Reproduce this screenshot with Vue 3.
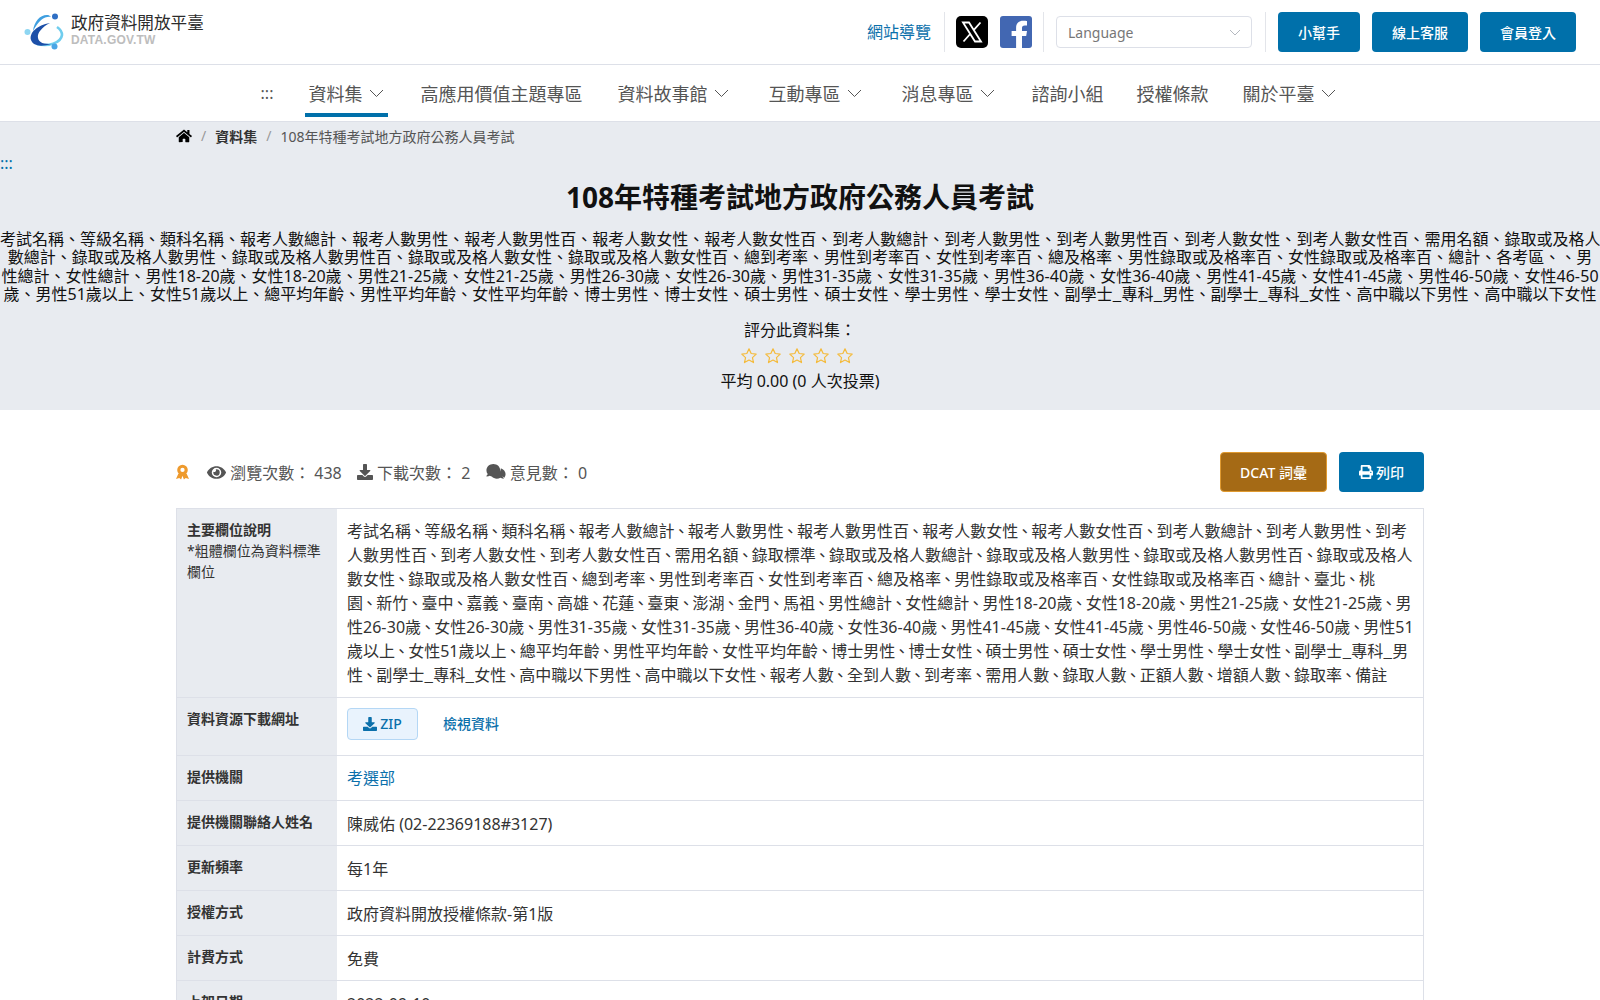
<script setup>
const navItems = [
  { label: '資料集', caret: true, active: true },
  { label: '高應用價值主題專區' },
  { label: '資料故事館', caret: true },
  { label: '互動專區', caret: true },
  { label: '消息專區', caret: true },
  { label: '諮詢小組' },
  { label: '授權條款' },
  { label: '關於平臺', caret: true }
]
const summaryLines = [
  '考試名稱、等級名稱、類科名稱、報考人數總計、報考人數男性、報考人數男性百、報考人數女性、報考人數女性百、到考人數總計、到考人數男性、到考人數男性百、到考人數女性、到考人數女性百、需用名額、錄取或及格人',
  '數總計、錄取或及格人數男性、錄取或及格人數男性百、錄取或及格人數女性、錄取或及格人數女性百、總到考率、男性到考率百、女性到考率百、總及格率、男性錄取或及格率百、女性錄取或及格率百、總計、各考區、、男',
  '性總計、女性總計、男性18-20歲、女性18-20歲、男性21-25歲、女性21-25歲、男性26-30歲、女性26-30歲、男性31-35歲、女性31-35歲、男性36-40歲、女性36-40歲、男性41-45歲、女性41-45歲、男性46-50歲、女性46-50',
  '歲、男性51歲以上、女性51歲以上、總平均年齡、男性平均年齡、女性平均年齡、博士男性、博士女性、碩士男性、碩士女性、學士男性、學士女性、副學士_專科_男性、副學士_專科_女性、高中職以下男性、高中職以下女性'
]
const fieldLines = [
  '考試名稱、等級名稱、類科名稱、報考人數總計、報考人數男性、報考人數男性百、報考人數女性、報考人數女性百、到考人數總計、到考人數男性、到考',
  '人數男性百、到考人數女性、到考人數女性百、需用名額、錄取標準、錄取或及格人數總計、錄取或及格人數男性、錄取或及格人數男性百、錄取或及格人',
  '數女性、錄取或及格人數女性百、總到考率、男性到考率百、女性到考率百、總及格率、男性錄取或及格率百、女性錄取或及格率百、總計、臺北、桃',
  '園、新竹、臺中、嘉義、臺南、高雄、花蓮、臺東、澎湖、金門、馬祖、男性總計、女性總計、男性18-20歲、女性18-20歲、男性21-25歲、女性21-25歲、男',
  '性26-30歲、女性26-30歲、男性31-35歲、女性31-35歲、男性36-40歲、女性36-40歲、男性41-45歲、女性41-45歲、男性46-50歲、女性46-50歲、男性51',
  '歲以上、女性51歲以上、總平均年齡、男性平均年齡、女性平均年齡、博士男性、博士女性、碩士男性、碩士女性、學士男性、學士女性、副學士_專科_男',
  '性、副學士_專科_女性、高中職以下男性、高中職以下女性、報考人數、全到人數、到考率、需用人數、錄取人數、正額人數、增額人數、錄取率、備註'
]
const rows = [
  ['提供機關', '考選部', true],
  ['提供機關聯絡人姓名', '陳威佑 (02-22369188#3127)'],
  ['更新頻率', '每1年'],
  ['授權方式', '政府資料開放授權條款-第1版'],
  ['計費方式', '免費'],
  ['上架日期', '2022-09-10']
]
const tokens = (line) => line.split(/([、_-])/).filter(Boolean)
const markClass = (t) => (t === '_' ? 'cjk' : t === '-' ? 'hy' : '')
const tokenClass = (t) => (t === '、' ? 'dun' : markClass(t))
</script>

<template>
  <div class="page">
    <header class="top">
      <div class="logo">
        <svg class="logo-mark" viewBox="0 0 40 38" width="40" height="38">
          <path d="M13 31C24 34 37 30 38 22C38 19 36 16 33 14" fill="none" stroke="#6fcdee" stroke-width="2.600" />
          <path d="M9 18C10 8 17 1 24 2c1 0 2 1 3 2-6-1-12 3-18 14z" fill="#3f9fe0" />
          <path d="M26 10C13 12 5 20 7 27c2 6 10 7 20 4-7 0-12-1-13-6-1-5 4-11 12-15z" fill="#1c4fa8" />
          <circle cx="31" cy="3.500" r="3" fill="#2f6fc4" />
          <circle cx="3.500" cy="19" r="3" fill="#8ed6f2" />
          <circle cx="30.500" cy="33.500" r="3" fill="#4aa6e6" />
        </svg>
        <div class="logo-text">
          <div class="logo-name">政府資料開放平臺</div>
          <div class="logo-domain">DATA.GOV.TW</div>
        </div>
      </div>
      <div class="tools">
        <a class="sitemap">網站導覽</a>
        <span class="sep"></span>
        <svg class="social x" viewBox="0 0 32 32" width="32" height="32">
          <rect width="32" height="32" rx="5" fill="#000" />
          <path d="M7 6.500h6l12 19h-6zM24.500 6.500 17.200 14.700M14.600 17.500 7.500 25.500" fill="none" stroke="#fff" stroke-width="1.800" />
        </svg>
        <svg class="social fb" viewBox="0 0 32 32" width="32" height="32">
          <rect width="32" height="32" rx="3" fill="#4267b2" />
          <path d="M22 32V20h4.200l.8-5h-5v-3c0-1.500.7-2.600 2.800-2.600H27V5c-.8-.1-2.200-.3-3.900-.3-4 0-7 2.400-7 7V15h-4.500v5h4.500v12z" fill="#fff" />
        </svg>
        <span class="sep"></span>
        <div class="lang">
          <span>Language</span>
          <svg viewBox="0 0 12 7" width="12" height="7"><path d="M1 1l5 5 5-5" fill="none" stroke="#b5b9c0" stroke-width="1" /></svg>
        </div>
        <span class="sep"></span>
        <a class="btn wide-s">小幫手</a>
        <a class="btn">線上客服</a>
        <a class="btn">會員登入</a>
      </div>
    </header>

    <nav class="nav">
      <span class="nav-dots">:::</span>
      <a v-for="item in navItems" :key="item.label" class="nav-item" :class="{ active: item.active, caret: item.caret }">
        {{ item.label }}
        <svg v-if="item.caret" viewBox="0 0 15 8" width="15" height="8"><path d="M1 1l6.500 6.500L14 1" fill="none" stroke="#555" stroke-width="1" /></svg>
      </a>
    </nav>

    <section class="hero">
      <div class="crumbs">
        <svg viewBox="0 0 576 512" width="16" height="14"><path d="M280 148 96 300v164c0 9 7 16 16 16l112-.3c9 0 16-7 16-16V368c0-9 7-16 16-16h64c9 0 16 7 16 16v96c0 9 7 16 16 16l112 .3c9 0 16-7 16-16V300L296 148c-4-4-12-4-16 0zM572 251l-84-69V44c0-7-5-12-12-12h-56c-7 0-12 5-12 12v72l-90-74c-18-15-43-15-61 0L4 251c-5 4-6 12-2 17l26 31c4 5 12 6 17 2L280 107c4-4 12-4 16 0l235 194c5 4 13 3 17-2l26-31c4-5 3-13-2-17z" fill="#000" /></svg>
        <span class="slash">/</span>
        <b>資料集</b>
        <span class="slash">/</span>
        <span class="crumb-last">108年特種考試地方政府公務人員考試</span>
      </div>
      <a class="hero-dots">:::</a>
      <h1>108年特種考試地方政府公務人員考試</h1>
      <p class="summary"><template v-for="line in summaryLines" :key="line"><template v-for="(t, i) in tokens(line)" :key="i"><span v-if="markClass(t)" :class="markClass(t)">{{ t }}</span><template v-else>{{ t }}</template></template><br /></template></p>
      <div class="rate">
        <div class="rate-label">評分此資料集：</div>
        <div class="stars">
          <svg v-for="n in 5" :key="n" viewBox="0 0 24 24" width="18" height="18"><path d="M12 2.500l2.900 6.200 6.700.8-5 4.600 1.400 6.700-6-3.400-6 3.400 1.400-6.700-5-4.600 6.700-.8z" fill="none" stroke="#f4bb3d" stroke-width="1.600" stroke-linejoin="round" /></svg>
        </div>
        <div class="rate-avg">平均 0.00 (0 人次投票)</div>
      </div>
    </section>

    <main class="content">
      <div class="stats">
        <div class="stats-left">
          <svg class="award" viewBox="0 0 14 16" width="13" height="16"><circle cx="7" cy="5.800" r="4" fill="none" stroke="#ee9a2d" stroke-width="3.400" /><path d="M2.500 10 0 15.500l3.500-1L5.500 16 7 12l1.500 4 2-1.500 3.500 1L11.500 10z" fill="#ee9a2d" /></svg>
          <span class="stat">
            <svg viewBox="0 0 576 512" width="19" height="17"><path d="M572 241C518 135 410 64 288 64S58 135 4 241a32 32 0 0 0 0 30c54 106 162 177 284 177s230-71 284-177a32 32 0 0 0 0-30zM288 400a144 144 0 1 1 144-144 144 144 0 0 1-144 144zm0-240a95 95 0 0 0-25 4 48 48 0 0 1-67 67 96 96 0 1 0 92-71z" fill="#555" /></svg>
            瀏覽次數： 438
          </span>
          <span class="stat downloads">
            <svg viewBox="0 0 512 512" width="16" height="16"><path d="M216 0h80c13 0 24 11 24 24v168h88c18 0 27 22 14 34L270 378c-8 8-20 8-28 0L90 226c-13-12-4-34 14-34h88V24c0-13 11-24 24-24zm296 376v112c0 13-11 24-24 24H24c-13 0-24-11-24-24V376c0-13 11-24 24-24h147l49 49c20 20 52 20 72 0l49-49h147c13 0 24 11 24 24z" fill="#555" /></svg>
            下載次數： 2
          </span>
          <span class="stat comments">
            <svg viewBox="0 0 576 512" width="20" height="17"><path d="M416 192C416 86 323 0 208 0S0 86 0 192c0 41 14 79 38 110-13 30-35 53-35 53-3 4-4 9-2 14s6 8 11 8c36 0 66-12 88-25 32 16 70 26 108 26 115 0 208-86 208-186zm122 220c24-31 38-69 38-108 0-80-60-150-144-178 1 6 1 12 1 18 0 127-121 230-270 234 35 39 90 64 149 64 38 0 76-10 108-26 22 13 52 25 88 25 5 0 9-3 11-8s1-10-2-14c0 0-22-23-35-53z" fill="#555" /></svg>
            意見數： 0
          </span>
        </div>
        <div class="stats-right">
          <a class="act dcat">DCAT 詞彙</a>
          <a class="act print">
            <svg viewBox="0 0 512 512" width="14" height="14"><path d="M448 192V77c0-8-3-17-9-23L393 9c-6-6-14-9-23-9H96C78 0 64 14 64 32v160c-35 0-64 29-64 64v112c0 9 7 16 16 16h48v96c0 18 14 32 32 32h320c18 0 32-14 32-32v-96h48c9 0 16-7 16-16V256c0-35-29-64-64-64zm-64 256H128v-96h256zm0-224H128V64h192v48c0 9 7 16 16 16h48zm48 72c-13 0-24-11-24-24s11-24 24-24 24 11 24 24-11 24-24 24z" fill="#fff" /></svg>
            列印
          </a>
        </div>
      </div>

      <div class="table">
        <div class="row">
          <div class="th"><b>主要欄位說明</b><span class="note">*粗體欄位為資料標準欄位</span></div>
          <div class="td"><template v-for="line in fieldLines" :key="line"><template v-for="(t, i) in tokens(line)" :key="i"><span v-if="tokenClass(t)" :class="tokenClass(t)">{{ t }}</span><template v-else>{{ t }}</template></template><br /></template></div>
        </div>
        <div class="row">
          <div class="th"><b>資料資源下載網址</b></div>
          <div class="td res">
            <a class="zip">
              <svg viewBox="0 0 512 512" width="14" height="14"><path d="M216 0h80c13 0 24 11 24 24v168h88c18 0 27 22 14 34L270 378c-8 8-20 8-28 0L90 226c-13-12-4-34 14-34h88V24c0-13 11-24 24-24zm296 376v112c0 13-11 24-24 24H24c-13 0-24-11-24-24V376c0-13 11-24 24-24h147l49 49c20 20 52 20 72 0l49-49h147c13 0 24 11 24 24z" fill="#0b70ab" /></svg>
              ZIP
            </a>
            <a class="view">檢視資料</a>
          </div>
        </div>
        <div v-for="r in rows" :key="r[0]" class="row">
          <div class="th"><b>{{ r[0] }}</b></div>
          <div class="td" :class="{ plain: !r[2] }"><a v-if="r[2]" class="link">{{ r[1] }}</a><template v-else>{{ r[1] }}</template></div>
        </div>
      </div>
    </main>
  </div>
</template>

<style>
html, body { margin: 0; background: #fff; overflow-x: hidden; }
</style>

<style scoped>
.page { width: 1600px; font-family: "Noto Sans", "Noto Sans CJK TC", sans-serif; color: #333; font-size: 16px; }
.cjk { font-family: "Noto Sans CJK TC", sans-serif; line-height: 0; }
.hy { letter-spacing: .28px; }
.top { height: 64px; border-bottom: 1px solid #dde0e8; display: flex; justify-content: space-between; align-items: flex-start; padding: 0 24px; box-sizing: content-box; }
.logo { display: flex; align-items: center; gap: 7px; margin-top: 13px; }
.logo-mark { display: block; }
.logo-text { display: flex; flex-direction: column; margin-top: -4px; }
.logo-name { font-size: 16.600px; line-height: 20px; color: #2b2b2b; white-space: nowrap; }
.logo-domain { font-family: "Liberation Sans", sans-serif; font-weight: 700; font-size: 12px; line-height: 14px; color: #bdbdbd; letter-spacing: .2px; }
.tools { display: flex; align-items: center; height: 40px; margin-top: 12px; }
.sitemap { color: #0b70ab; width: 64px; line-height: 24px; margin-right: 13px; white-space: nowrap; }
.sep { width: 1px; height: 40px; background: #e3e5ea; }
.social { display: block; margin-left: 12px; }
.social.x { margin-left: 11px; }
.social.fb { margin-right: 11px; }
.lang { margin-left: 12px; margin-right: 13px; width: 196px; height: 32px; box-sizing: border-box; border: 1px solid #dde0e8; border-radius: 4px; display: flex; align-items: center; justify-content: space-between; padding: 0 10px 0 11px; font-size: 14px; color: #777; }
.btn { width: 96px; height: 40px; margin-left: 12px; border-radius: 4px; background: #0070aa; color: #fff; font-size: 14px; font-weight: 500; display: flex; align-items: center; justify-content: center; }
.btn.wide-s { width: 82px; }
.nav { height: 56px; border-bottom: 1px solid #dde0e8; display: flex; justify-content: center; align-items: stretch; color: #555; font-size: 18px; }
.nav-dots { display: flex; align-items: center; font-size: 16px; padding-right: 32px; }
.nav-item { display: flex; align-items: center; gap: 7px; padding: 0 3px; margin-right: 28px; margin-bottom: 4px; border-bottom: 4px solid transparent; border-top: 8px solid transparent; white-space: nowrap; }
.nav-item.caret { margin-right: 33px; }
.nav-item.active { border-bottom-color: #0070aa; padding-right: 4px; margin-right: 29px; }
.nav-item:nth-of-type(2) { margin-right: 29px; }
.nav-item:nth-of-type(5) { margin-right: 30px; }
.nav-item:nth-of-type(6) { margin-right: 27px; }
.nav-item:last-child { margin-right: 0; }
.hero { background: #e8ebf0; height: 288px; text-align: center; color: #111; }
.crumbs { display: flex; align-items: center; gap: 9px; padding-left: 176px; height: 27px; font-size: 14px; text-align: left; }
.crumbs b { font-weight: 700; color: #333; }
.slash { color: #999; }
.crumb-last { color: #555; }
.hero-dots { display: block; margin-top: 4px; text-align: left; color: #0070aa; line-height: 20px; height: 20px; }
h1 { margin: 4px 0 13px; font-size: 28px; line-height: 40px; font-weight: 700; color: #111; }
.summary { margin: 0; font-size: 16px; line-height: 18.400px; white-space: nowrap; }
.rate { margin-top: 14px; }
.rate-label { line-height: 24px; margin-bottom: 2px; }
.stars { display: flex; justify-content: center; gap: 6px; height: 25px; align-items: center; padding-right: 6px; }
.stars svg { display: block; }
.rate-avg { line-height: 24px; }
.content { padding: 42px 176px 0; }
.stats { display: flex; justify-content: space-between; align-items: center; height: 40px; margin-bottom: 16px; }
.stats-left { display: flex; align-items: center; gap: 12px; color: #555; }
.award { margin-right: 6px; }
.stat { display: flex; align-items: center; gap: 0; white-space: pre; }
.stat.downloads { margin-left: -1px; }
.stat.comments { margin-left: -1px; }
.stats-right { display: flex; gap: 12px; }
.act { height: 40px; box-sizing: border-box; border-radius: 4px; display: flex; align-items: center; justify-content: center; color: #fff; font-size: 14px; font-weight: 500; gap: 3px; }
.dcat { width: 107px; background: #a56a15; border: 1px solid #e09a30; }
.print { width: 85px; background: #0070aa; }
.table { border: 1px solid #dde0e8; border-bottom: 0; }
.row { display: flex; border-bottom: 1px solid #dde0e8; }
.th { width: 160px; flex: none; box-sizing: border-box; background: #e8ebf0; padding: 10px 10px; font-size: 14px; line-height: 21px; color: #333; }
.th b { display: block; font-weight: 700; }
.note { display: block; }
.td { flex: 1; padding: 10px; line-height: 24px; color: #333; white-space: nowrap; }
.td.plain { padding: 11px 10px 9px; }
.dun { margin: 0 -1.430px; }
.res { display: flex; align-items: flex-start; gap: 25px; height: 57px; box-sizing: border-box; }
.zip { display: flex; align-items: center; gap: 3px; width: 71px; height: 32px; box-sizing: border-box; justify-content: center; background: #e9f3fd; border: 1px solid #b4d7f5; border-radius: 4px; color: #0b70ab; font-size: 14px; font-weight: 500; }
.view { color: #0b70ab; font-size: 14px; font-weight: 500; line-height: 32px; }
.link { color: #0b70ab; }
</style>
